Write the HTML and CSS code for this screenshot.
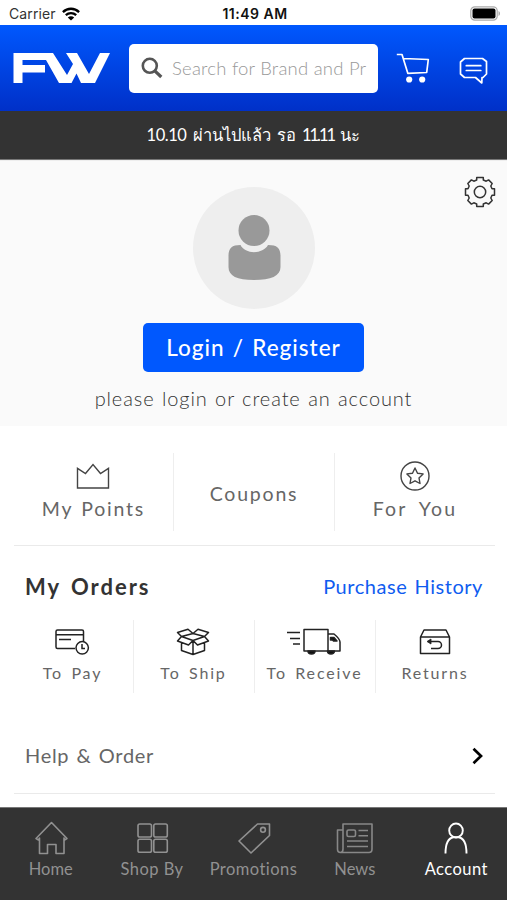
FILE: index.html
```html
<!DOCTYPE html>
<html lang="th">
<head>
<meta charset="utf-8">
<title>Account</title>
<link rel="stylesheet" href="styles.css">
</head>
<body>
<div class="status">
  <div class="carrier"><span>Carrier</span>
    <svg width="18" height="14" viewBox="0 0 18 14" fill="none" stroke="#000" stroke-width="2.3"><path d="M.9 5.1C5.5.6 12.5.6 17.1 5.1M3.8 8.2c3-2.9 7.4-2.9 10.4 0"/><path d="M9 13.6 5.8 10.4c1.8-1.7 4.6-1.7 6.4 0z" fill="#000" stroke="none"/></svg>
  </div>
  <div class="clock">11:49 AM</div>
  <svg class="battery" width="31" height="15" viewBox="0 0 31 15"><rect x=".8" y=".8" width="26.4" height="13.4" rx="4" fill="#fff" stroke="#aaa" stroke-width="1.2"/><rect x="2.5" y="2.5" width="23" height="10" rx="2" fill="#000"/><path d="M28.500 5c2 .7 2 4.300 0 5z" fill="#aaa"/></svg>
</div>
<header class="header">
  <svg class="logo" width="98" height="32" viewBox="0 0 98 32" fill="#fff"><path d="M.5 1H40L54 23 60 12 53 1H64L76 22 87 1H97L82 31H68L63.500 21.500 58.500 31H46L33 8H9.500V13H32V20.500H9.500V31H.5z"/></svg>
  <div class="search">
    <svg width="22" height="22" viewBox="0 0 22 22" fill="none" stroke="#555"><circle cx="8.800" cy="8.800" r="7" stroke-width="2.600"/><path d="M13.800 13.800 20.300 20" stroke-width="3.200"/></svg>
    <div class="placeholder">Search for Brand and Pr</div>
  </div>
  <svg class="cart" width="34" height="32" viewBox="0 0 34 32" fill="none" stroke="#fff" stroke-width="1.700" stroke-linejoin="round"><path d="M.8 2.500H6L11.800 21.300 30.700 20.500 32.300 7.500 7.600 6.500"/><circle cx="13.200" cy="27.500" r="3.100" fill="#fff" stroke="none"/><circle cx="26.200" cy="27.500" r="3.100" fill="#fff" stroke="none"/></svg>
  <svg class="chat" width="29" height="28" viewBox="0 0 29 28" fill="none" stroke="#fff" stroke-width="1.700" stroke-linecap="round" stroke-linejoin="round"><path d="M5.500 1.500H23.500L27.500 4.500V17L24 20.500H23L22.800 26 16.500 20.500H5.500L1.500 17V5z"/><path d="M7.300 8.700h14.500M7.300 13.500h14.500"/></svg>
</header>
<div class="banner"><p><span class="ten">10.10</span> ผ่านไปแล้ว รอ <span class="eleven">11.11</span> นะ</p></div>
<section class="profile">
  <svg class="gear" width="32" height="32" viewBox="0 0 32 32" fill="none" stroke="#333" stroke-width="1.500" stroke-linejoin="round"><path d="M12.700 1.500H19.300V4L22.200 5.200 24.600 3.900 28.200 7.500 26.800 10 28 12.700H30.500V19.300H28L26.800 22 28.200 24.500 24.600 28.100 22.200 26.800 19.300 28V30.500H12.700V28L9.800 26.800 7.400 28.100 3.800 24.500 5.200 22 4 19.300H1.500V12.700H4L5.200 10 3.800 7.500 7.400 3.900 9.800 5.200 12.700 4z"/><circle cx="16" cy="16" r="5.700"/></svg>
  <svg class="avatar" width="122" height="122" viewBox="0 0 122 122"><circle cx="61" cy="61" r="61" fill="#eee"/><circle cx="61" cy="43.500" r="15.500" fill="#999"/><path d="M47.500 58C52 67.500 70 67.500 75 58 84 58 87.500 61 87.500 69V80C87.500 89 78 93 61 93S35.500 89 35.500 80V69C35.500 61 39 58 47.500 58z" fill="#999"/></svg>
  <div class="login"><span>Login / Register</span></div>
  <div class="hint"><span>please login or create an account</span></div>
</section>
<section class="perks">
  <div class="perk"><svg width="34" height="30" viewBox="0 0 34 30" fill="none" stroke="#444" stroke-width="1.400"><path d="M1.500 27V7.300L9.500 12.500 17 3.500 24.500 12.500 32.500 7.300V27z"/></svg><span>My Points</span></div>
  <div class="perk coupons"><span>Coupons</span></div>
  <div class="perk you"><svg width="30" height="30" viewBox="0 0 30 30" fill="none" stroke="#444" stroke-width="1.400" stroke-linejoin="round"><circle cx="15" cy="15" r="14"/><path d="M15 7 17.500 12.200 23.100 12.900 19 16.900 20 22.500 15 19.800 10 22.500 11 16.900 6.900 12.900 12.500 12.200z"/></svg><span>For You</span></div>
</section>
<section class="orders">
  <div class="orders-head"><h2>My Orders</h2><a>Purchase History</a></div>
  <div class="steps">
    <div class="step"><svg width="36" height="28" viewBox="0 0 36 28" fill="none" stroke="#222" stroke-width="1.500"><path d="M21 20.500H3.500Q2 20.500 2 19V3.500Q2 2 3.500 2H28Q29.500 2 29.500 3.500V13M2 6.700H29.500M5 11.500H17"/><circle cx="28.200" cy="19.800" r="6.200"/><path d="M28 16V20.500H31"/></svg><span>To Pay</span></div>
    <div class="step"><svg width="36" height="28" viewBox="0 0 36 28" fill="none" stroke="#222" stroke-width="1.500" stroke-linejoin="round"><path d="M6.500 8.500 18 12.500 29.500 8.500 18 5.500zM6.500 8.500 2.500 4.500 13 1.200 18 5.500 23 1.200 33.500 4.500 29.500 8.500 33.500 13 22.500 17 18 12.500 13.500 17 2.500 13zM6.500 15V22.500L18 26.500 29.500 22.500V15M18 12.500V26.500"/></svg><span>To Ship</span></div>
    <div class="step"><svg width="54" height="28" viewBox="0 0 54 28" fill="none" stroke="#222" stroke-width="1.500" stroke-linejoin="round"><path d="M0 4.500H13M3 10.500H13M6 16H13M17 1.500H41V23H17zM41 6H47Q53 11 53 14V23H41"/><path d="M43.500 9.500H47L50 13H46.500L45.500 12H43.500zM21 23H28A3.500 3 0 0 1 21 23zM40.500 23H47.500A3.500 3 0 0 1 40.500 23z" fill="#111"/></svg><span>To Receive</span></div>
    <div class="step"><svg width="32" height="28" viewBox="0 0 32 28" fill="none" stroke="#222" stroke-width="1.500" stroke-linejoin="round"><path d="M1.500 9 5 2H27L30.500 9V25.500H1.500zM1.500 9H30.500"/><path d="M10 13.500H19A3.500 3.500 0 0 1 19 20.500H12"/><path d="M8 13.500 12 11V16z" fill="#222" stroke-width=".8"/></svg><span>Returns</span></div>
  </div>
</section>
<div class="help"><span>Help &amp; Order</span><svg width="12" height="18" viewBox="0 0 12 18" fill="none" stroke="#000" stroke-width="2.700"><path d="M1.500 1.800 9 9 1.500 16.200"/></svg></div>
<nav class="nav">
  <div class="tab"><svg width="38" height="36" viewBox="0 0 38 36" fill="none" stroke="#919191" stroke-width="1.600" stroke-linejoin="round"><path d="M4 18.500 19.500 2.500 35 18.500 32.500 20 32 18V33.500H24V24.500H15.500V33.500H7.500V18L6.500 20z"/></svg><span>Home</span></div>
  <div class="tab wide"><svg width="38" height="36" viewBox="0 0 38 36" fill="none" stroke="#919191" stroke-width="1.600"><rect x="5" y="4" width="13.500" height="13" rx="1.800"/><rect x="20.800" y="4" width="13.500" height="13" rx="1.800"/><rect x="5" y="19.300" width="13.500" height="13" rx="1.800"/><rect x="20.800" y="19.300" width="13.500" height="13" rx="1.800"/></svg><span>Shop By</span></div>
  <div class="tab wide"><svg width="38" height="36" viewBox="0 0 38 36" fill="none" stroke="#919191" stroke-width="1.600" stroke-linejoin="round"><path d="M5 21 23.500 4H35.500V15.500L17 33z"/><circle cx="29" cy="9.800" r="2.400"/></svg><span>Promotions</span></div>
  <div class="tab"><svg width="38" height="36" viewBox="0 0 38 36" fill="none" stroke="#888" stroke-width="1.600" stroke-linejoin="round"><path d="M7 4H36V29Q36 32.500 33 32.500H4.500Q1.500 32.500 1.500 29V10H7zM7 10V29Q7 32.500 4.500 32.500M22.500 10.500H32M22.500 15.800H32M11 21H32M11 26.500H32"/><rect x="11" y="10" width="8.500" height="6.500" rx="1.500"/></svg><span>News</span></div>
  <div class="tab wide active"><svg width="38" height="36" viewBox="0 0 38 36" fill="none" stroke="#fff" stroke-width="1.900"><ellipse cx="19" cy="10.500" rx="6.800" ry="7"/><path d="M8.500 33.500C8.500 23 11.500 18 16.500 17.200H21.500C26.500 18 29.500 23 29.500 33.500"/></svg><span>Account</span></div>
</nav>
</body>
</html>
```
FILE: styles.css
```css
* { box-sizing: border-box; }
body { margin: 0; width: 507px; height: 900px; overflow: hidden; background: #fff; color: #666; font-family: Lato, "Noto Sans", sans-serif; display: flex; flex-direction: column; }
svg { display: block; flex: none; }
p { margin: 0; }
span, p, h2, a { white-space: nowrap; }
.status { height: 25px; flex: none; display: grid; grid-template-columns: 1fr auto 1fr; align-items: center; padding: 2px 6px 0 9px; font-family: Inter, sans-serif; font-size: 14px; color: #333; }
.carrier { display: flex; align-items: center; gap: 6px; letter-spacing: .1px; }
.clock { font-weight: 600; color: #111; letter-spacing: .5px; }
.battery { justify-self: end; }
.header { height: 86px; flex: none; background: linear-gradient(#0058fe, #0030c8); display: flex; align-items: center; padding-left: 13px; }
.search { width: 249px; height: 49px; margin-left: 18px; background: #fff; border-radius: 5px; display: flex; align-items: center; padding: 0 12px; gap: 9px; }
.placeholder { white-space: nowrap; font-size: 18.500px; font-weight: 300; color: #999; letter-spacing: .22px; line-height: 28px; }
.cart { margin-left: 18px; }
.chat { margin: 5px 0 0 29px; }
.banner { height: 49px; flex: none; background: #333; border-bottom: 1px solid #777; color: #fff; font-size: 16.500px; word-spacing: 2px; display: flex; align-items: center; justify-content: center; }
.ten { letter-spacing: -.5px; }
.eleven { letter-spacing: -2px; }
.profile { position: relative; height: 266px; flex: none; background: #fafafa; border-top: 1px solid #eee; display: flex; flex-direction: column; align-items: center; padding-top: 26px; }
.gear { position: absolute; right: 11px; top: 15px; }
.login { margin-top: 14px; width: 221px; height: 49px; border-radius: 5px; background: #0058fe; color: #fff; font-size: 22.500px; font-weight: 500; letter-spacing: 1px; word-spacing: 1.500px; display: flex; align-items: center; justify-content: center; }
.hint { margin-top: 12px; line-height: 28px; font-size: 20px; font-weight: 300; color: #333; letter-spacing: .9px; word-spacing: 1.100px; }
.perks { height: 120px; flex: none; margin: 0 12px 0 14px; border-bottom: 1px solid #eaeaea; display: grid; grid-template-columns: 160px 161px 160px; padding: 27px 0 14px; font-size: 19.500px; }
.perk { display: flex; flex-direction: column; align-items: center; justify-content: center; gap: 4px; border-right: 1px solid #eee; letter-spacing: 1.800px; word-spacing: 1.500px; }
.perk:first-child { padding-right: 2px; }
.perk:last-child { border: 0; }
.perk.coupons { padding: 3px 2px 0 0; }
.perk.you { word-spacing: 5px; letter-spacing: 2.200px; }
.perk span { line-height: 28px; margin-right: -2px; }
.perk.you span { margin-right: 0; }
.orders { padding-top: 23px; flex: none; }
.orders-head { display: flex; align-items: center; justify-content: space-between; height: 34px; padding: 0 24px 0 25px; }
h2 { margin: 0; font-size: 22px; font-weight: 700; color: #333; letter-spacing: 2px; word-spacing: 3px; }
.orders-head a { color: #0f5cf0; font-size: 20px; letter-spacing: .55px; word-spacing: 1.500px; }
.steps { display: grid; grid-template-columns: 121px 121px 121px 119px; margin: 17px 0 0 13px; height: 73px; font-size: 16px; letter-spacing: 1.850px; word-spacing: 2.500px; }
.step { display: flex; flex-direction: column; align-items: center; padding: 8px 2px 0 0; border-right: 1px solid #eee; }
.step:last-child { border: 0; }
.step span { line-height: 24px; margin: 5px -1px 0 0; }
.help { flex: none; height: 75px; margin: 26px 12px 0 14px; padding: 0 11px; display: flex; align-items: center; justify-content: space-between; border-bottom: 1px solid #eaeaea; font-size: 20px; letter-spacing: .7px; word-spacing: 1.500px; }
.help span { margin-top: -2px; }
.nav { margin-top: 13px; flex: 1; background: #333; border-top: 1px solid #777; display: grid; grid-template-columns: repeat(5, 101.400px); color: #919191; font-size: 16.500px; }
.tab { display: flex; flex-direction: column; align-items: center; padding-top: 12px; }
.tab span { line-height: 24px; margin-top: 1px; }
.wide { letter-spacing: .45px; }
.active { color: #fff; }
```
